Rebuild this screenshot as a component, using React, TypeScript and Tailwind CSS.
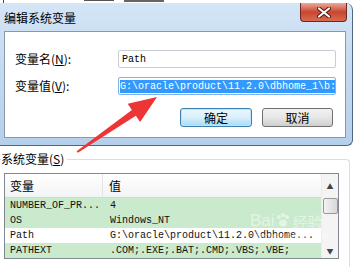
import React from 'react';

const cjk = "font-['Noto_Sans_CJK_SC',sans-serif]";
const mono = "font-['Liberation_Mono','Noto_Sans_CJK_SC',monospace]";

const rows = [
  { name: 'NUMBER_OF_PR...', value: '4', bg: 'bg-[#c9eacc]' },
  { name: 'OS', value: 'Windows_NT', bg: 'bg-[#c9eacc]' },
  { name: 'Path', value: 'G:\\oracle\\product\\11.2.0\\dbhome...', bg: 'bg-white' },
  { name: 'PATHEXT', value: '.COM;.EXE;.BAT;.CMD;.VBS;.VBE;', bg: 'bg-[#c9eacc]' },
];

const App = () => {
  return (
    <div className={`w-[359px] h-[267px] bg-white relative overflow-hidden ${cjk}`}>
      {/* bit of the page above the dialog */}
      <div className="h-[3px] flex items-start pl-[3px]">
        <div className="w-[1px] h-[3px] bg-[#444]" />
        <div className="ml-[80px] w-[30px] h-[1px] bg-[#555]" />
        <div className="ml-[10px] w-[40px] h-[2px] bg-[#666]" />
      </div>

      {/* dialog */}
      <div className="w-[353px] h-[143px] flex flex-col bg-gradient-to-b from-[#d4e5f6] via-[#c3d9f0] to-[#b6cfea] border-r border-b border-[#50657e] rounded-tr-[7px] rounded-br-[6px]">
        <div className="h-[28px] flex items-start justify-between">
          <span className="pl-[4px] pt-[8px] text-[12px] leading-[14px] text-black">编辑系统变量</span>
          <div className="mr-[5px] w-[47px] h-[19px] rounded-b-[4px] border border-t-0 border-[#6b2a22] bg-gradient-to-b from-[#e9a899] via-[#c8452f] to-[#d96b4f] flex items-center justify-center">
            <svg width="14" height="11" viewBox="0 0 14 11">
              <path d="M2 1.5 L12 9.5 M12 1.5 L2 9.5" stroke="#4a1a12" strokeWidth="4" strokeLinecap="round" />
              <path d="M2 1.5 L12 9.5 M12 1.5 L2 9.5" stroke="#ffffff" strokeWidth="2.2" strokeLinecap="round" />
            </svg>
          </div>
        </div>

        <div className="ml-[4px] w-[342px] h-[107px] bg-white border border-[#8899ac] flex flex-col pl-[10px] pt-[18px] text-[12px] text-black">
          <div className="flex items-center h-[18px]">
            <span className="w-[103px] leading-[14px]">
              变量名(<span className="underline">N</span>):
            </span>
            <div className={`w-[218px] h-[18px] border border-[#c9ced4] rounded-[2px] flex items-center pl-[3px] text-[10px] ${mono}`}>
              Path
            </div>
          </div>
          <div className="flex items-center h-[18px] mt-[9px]">
            <span className="w-[103px] leading-[14px]">
              变量值(<span className="underline">V</span>):
            </span>
            <div className={`w-[218px] h-[18px] border border-[#7eb4ea] rounded-[2px] flex items-center pl-[1px] text-[10px] ${mono}`}>
              <span className="bg-[#3399ff] text-white leading-[13px] h-[13px] whitespace-nowrap overflow-hidden">
                G:\oracle\product\11.2.0\dbhome_1\b:
              </span>
            </div>
          </div>
          <div className="flex mt-[13px] pl-[165px] gap-[10px]">
            <div className="w-[72px] h-[19px] rounded-[3px] border border-[#3c7fb1] bg-gradient-to-b from-[#eaf6fd] via-[#d9f0fc] to-[#a7d9f5] flex items-center justify-center shadow-[inset_0_0_0_1px_#bfe4f9]">
              确定
            </div>
            <div className="w-[71px] h-[19px] rounded-[3px] border border-[#707070] bg-gradient-to-b from-[#f2f2f2] via-[#e6e6e6] to-[#cfcfcf] flex items-center justify-center">
              取消
            </div>
          </div>
        </div>
      </div>

      {/* system variables group */}
      <div className="mt-[13px] w-[350px] h-[120px] border-t border-r border-[#d5dfe5] rounded-tr-[4px] relative">
        <span className="absolute -top-[9px] left-[1px] bg-white pr-[3px] text-[12px] leading-[16px] text-black">
          系统变量(<span className="underline">S</span>)
        </span>
        <div className="ml-[4px] mt-[13px] w-[335px] h-[86px] border border-[#828790] flex">
          <div className="w-[316px] flex flex-col">
            <div className="h-[25px] flex bg-gradient-to-b from-white to-[#f2f3f5] border-b border-[#d5d5d5] text-[12px] text-black">
              <div className="w-[98px] border-r border-[#e3e5e8] flex items-center pl-[5px]">变量</div>
              <div className="flex-1 flex items-center pl-[6px]">值</div>
            </div>
            {rows.map((r) => (
              <div key={r.name} className={`h-[15px] shrink-0 flex items-center text-[10px] text-[#111] ${mono} ${r.bg}`}>
                <span className="w-[98px] pl-[5px] whitespace-nowrap">{r.name}</span>
                <span className="pl-[7px] whitespace-nowrap">{r.value}</span>
              </div>
            ))}
          </div>
          <div className="w-[17px] bg-[#f4f4f4] border-l border-[#ececec] flex flex-col items-center">
            <div className="h-[24px] flex items-center justify-center text-[7px] text-[#444]">▲</div>
            <div className="w-[15px] h-[16px] rounded-[2px] border border-[#989898] bg-gradient-to-r from-[#f3f3f3] to-[#d8d8d8]" />
            <div className="flex-1" />
            <div className="h-[14px] flex items-center justify-center text-[7px] text-[#444]">▼</div>
          </div>
        </div>
      </div>

      {/* watermark */}
      <div className="absolute left-[250px] top-[212px] text-white opacity-50 pointer-events-none leading-none">
        <div className="flex items-end text-[17px] font-['Liberation_Sans',sans-serif]">
          Bai
          <svg width="16" height="16" viewBox="0 0 16 16" className="mb-[1px]">
            <circle cx="4" cy="5" r="2" fill="white" />
            <circle cx="8" cy="3" r="2" fill="white" />
            <circle cx="12" cy="5" r="2" fill="white" />
            <ellipse cx="8" cy="11" rx="4" ry="3.5" fill="white" />
          </svg>
          <span className={`ml-[2px] text-[15px] ${cjk}`}>经验</span>
        </div>
        <div className="text-[9px] mt-[3px] pl-[6px] font-['Liberation_Sans',sans-serif]">jingyan.baidu.com</div>
      </div>

      {/* red arrow */}
      <svg className="absolute left-0 top-0 pointer-events-none" width="359" height="267" viewBox="0 0 359 267">
        <polygon
          points="76.6,151.2 131.9,110 127.7,103.8 157,97 140.1,122 135.9,115.8 77.8,152.8"
          fill="#ee3535"
        />
      </svg>
    </div>
  );
};

export default App;
